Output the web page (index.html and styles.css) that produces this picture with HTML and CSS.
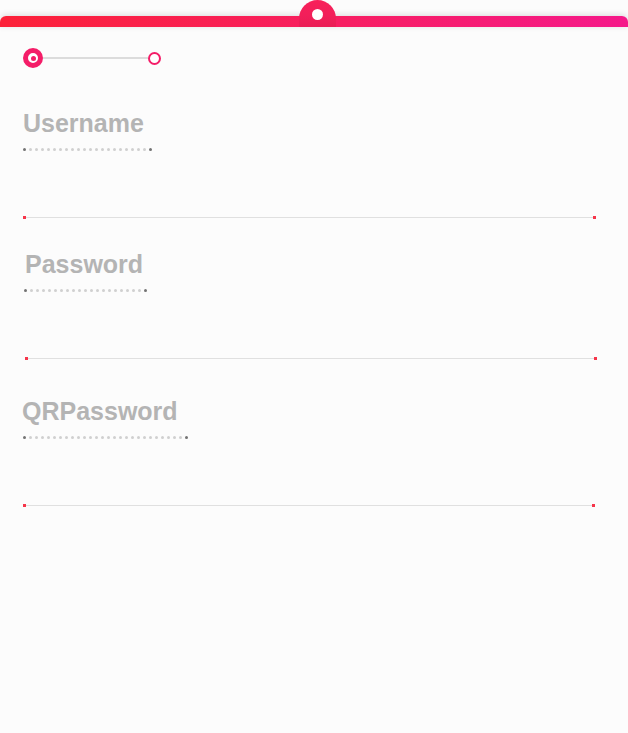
FILE: index.html
```html
<!DOCTYPE html>
<html>
<head>
<meta charset="utf-8">
<link rel="stylesheet" href="styles.css">
</head>
<body>
<div class="page">
  <div class="topbar"><span class="knob"><span class="knob-hole"></span></span></div>

  <div class="stepper">
    <span class="step step-active"><span class="step-core"></span></span>
    <span class="step-line"></span>
    <span class="step step-next"></span>
  </div>

  <div class="field field-user">
    <div class="label">Username</div>
    <div class="dots dots-user">
      <span class="dot dark"></span><span class="dot"></span><span class="dot"></span><span class="dot"></span><span class="dot"></span><span class="dot"></span><span class="dot"></span><span class="dot"></span><span class="dot"></span><span class="dot"></span><span class="dot"></span><span class="dot"></span><span class="dot"></span><span class="dot"></span><span class="dot"></span><span class="dot"></span><span class="dot"></span><span class="dot"></span><span class="dot"></span><span class="dot"></span><span class="dot"></span><span class="dot dark"></span>
    </div>
    <div class="rule rule-user"></div>
  </div>

  <div class="field field-pass">
    <div class="label">Password</div>
    <div class="dots dots-pass">
      <span class="dot dark"></span><span class="dot"></span><span class="dot"></span><span class="dot"></span><span class="dot"></span><span class="dot"></span><span class="dot"></span><span class="dot"></span><span class="dot"></span><span class="dot"></span><span class="dot"></span><span class="dot"></span><span class="dot"></span><span class="dot"></span><span class="dot"></span><span class="dot"></span><span class="dot"></span><span class="dot"></span><span class="dot"></span><span class="dot"></span><span class="dot dark"></span>
    </div>
    <div class="rule rule-pass"></div>
  </div>

  <div class="field field-qr">
    <div class="label">QRPassword</div>
    <div class="dots dots-qr">
      <span class="dot dark"></span><span class="dot"></span><span class="dot"></span><span class="dot"></span><span class="dot"></span><span class="dot"></span><span class="dot"></span><span class="dot"></span><span class="dot"></span><span class="dot"></span><span class="dot"></span><span class="dot"></span><span class="dot"></span><span class="dot"></span><span class="dot"></span><span class="dot"></span><span class="dot"></span><span class="dot"></span><span class="dot"></span><span class="dot"></span><span class="dot"></span><span class="dot"></span><span class="dot"></span><span class="dot"></span><span class="dot"></span><span class="dot"></span><span class="dot"></span><span class="dot dark"></span>
    </div>
    <div class="rule rule-qr"></div>
  </div>
</div>
</body>
</html>
```

FILE: styles.css
```css
html, body {
  margin: 0;
  padding: 0;
  background: #fcfcfc;
}

.page {
  width: 628px;
  height: 733px;
  overflow: hidden;
  font-family: "Liberation Sans", Arial, sans-serif;
  padding-top: 16px;
  box-sizing: border-box;
}

.topbar {
  position: relative;
  height: 11px;
  border-radius: 6px 6px 0 0;
  background: linear-gradient(90deg, #fc2138 0%, #f71e62 55%, #f5198a 100%);
  box-shadow: 0 -1px 6px rgba(0, 0, 0, 0.14);
}

.knob {
  position: absolute;
  left: 299px;
  top: -16px;
  width: 37px;
  height: 27px;
  border-radius: 18.5px 18.5px 0 0;
  background: linear-gradient(180deg, #f8215a 0%, #f21f5a 55%, #ea1d55 100%);
  display: flex;
  justify-content: center;
}

.knob-hole {
  margin-top: 9px;
  width: 11px;
  height: 11px;
  border-radius: 50%;
  background: #ffffff;
}

.stepper {
  margin-top: 21px;
  padding-left: 23px;
  height: 20px;
  display: flex;
  align-items: center;
}

.step {
  box-sizing: border-box;
  border-radius: 50%;
  flex: none;
}

.step-active {
  width: 20px;
  height: 20px;
  border: 5px solid #f41d68;
  background: #ffffff;
  display: flex;
  align-items: center;
  justify-content: center;
}

.step-core {
  width: 5px;
  height: 5px;
  border-radius: 50%;
  background: #f41d68;
}

.step-line {
  width: 105px;
  height: 2px;
  background: #dcdcdc;
}

.step-next {
  width: 13px;
  height: 13px;
  border: 2px solid #f41d68;
  background: #ffffff;
}

.field {
  padding-left: 22px;
}

.field-user { margin-top: 40px; }
.field-pass { margin-top: 30px; padding-left: 23px; }
.field-qr { margin-top: 36px; }

.label {
  font-size: 25px;
  line-height: 30px;
  font-weight: 700;
  color: #b4b4b4;
}

.field-user .label { padding-left: 1px; }
.field-pass .label { padding-left: 2px; }

.dots {
  margin-top: 10px;
  margin-left: 1px;
  height: 3px;
  display: flex;
  justify-content: space-between;
}

.dots-user { width: 129px; }
.dots-pass { width: 123px; margin-left: 1px; }
.dots-qr { width: 165px; }

.dot {
  width: 3px;
  height: 3px;
  border-radius: 50%;
  background: #d0d0d0;
}

.dot.dark {
  background: #737373;
}

.rule {
  position: relative;
  margin-top: 65px;
  margin-left: 1px;
  height: 3px;
  display: flex;
  align-items: center;
}

.rule::before {
  content: "";
  display: block;
  width: 100%;
  height: 1px;
  background: #e0e0e0;
}

.rule::after {
  content: "";
  position: absolute;
  left: 0;
  right: 0;
  top: 0;
  height: 3px;
  background:
    linear-gradient(#f6354a, #f6354a) left top / 3px 3px no-repeat,
    linear-gradient(#f6354a, #f6354a) right top / 3px 3px no-repeat;
}

.rule-user { width: 573px; }
.rule-pass { width: 572px; margin-left: 2px; }
.rule-qr { width: 572px; }
```
